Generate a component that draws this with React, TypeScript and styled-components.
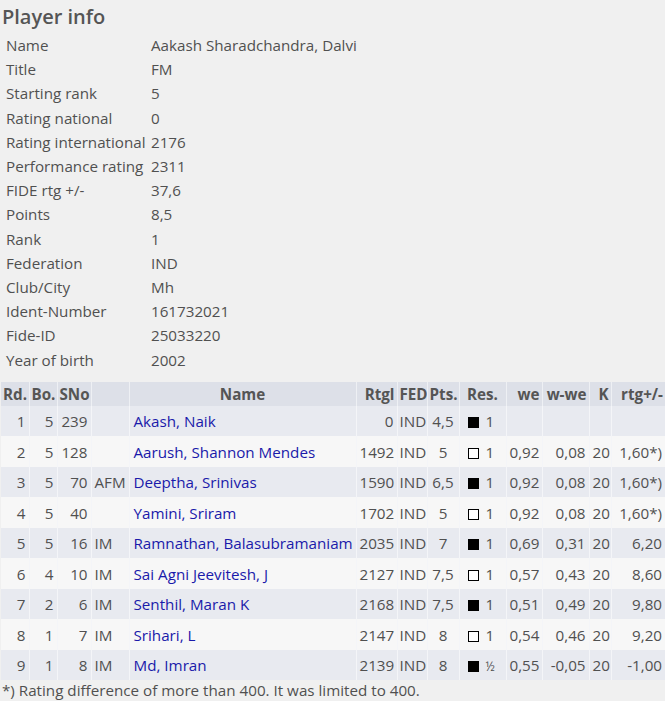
import React from "react";
import styled, { createGlobalStyle } from "styled-components";

const Global = createGlobalStyle`
  html, body { margin: 0; padding: 0; background: #f0f0f0; }
  body { font-family: "Open Sans", "Noto Sans", sans-serif; color: #505050; }
`;

const Page = styled.div`
  padding: 2px 0 0 1px;
  width: 664px;
`;

const Title = styled.h2`
  margin: 0 0 1px 1px;
  font-size: 20px;
  font-weight: 600;
  line-height: 30px;
  color: #555;
`;

const InfoTable = styled.div`
  display: grid;
  grid-template-columns: 145px auto;
  padding-left: 5px;
  font-size: 15.2px;
  margin-bottom: 10px;
`;

const InfoCell = styled.div`
  line-height: 24.2px;
  white-space: nowrap;
`;

const Table = styled.table`
  border-collapse: collapse;
  font-size: 15.2px;
  width: 664px;
  table-layout: fixed;
`;

const Th = styled.th<{ $align?: string }>`
  background: #dde0e8;
  font-weight: 700;
  color: #555;
  height: 24px;
  padding: 0 2px;
  text-align: ${(p) => p.$align || "right"};
  border-right: 1px solid #eef0f4;
  white-space: nowrap;
  overflow: hidden;
  &:last-child { border-right: none; }
`;

const Tr = styled.tr<{ $odd: boolean }>`
  background: ${(p) => (p.$odd ? "#e8eaf0" : "#f7f7f7")};
`;

const Td = styled.td<{ $align?: string; $pl?: number }>`
  height: 30.5px;
  padding: 0 3px 0 ${(p) => (p.$pl ?? 3)}px;
  text-align: ${(p) => p.$align || "right"};
  border-right: 1px solid #f4f5f8;
  white-space: nowrap;
  overflow: hidden;
  &:last-child { border-right: none; }
`;

const NameLink = styled.a`
  color: #1a1aaa;
  text-decoration: none;
`;

const Square = styled.span<{ $black: boolean }>`
  display: inline-block;
  width: 11px;
  height: 11px;
  box-sizing: border-box;
  background: ${(p) => (p.$black ? "#000" : "#fff")};
  border: 1px solid #000;
  vertical-align: -1px;
  margin-right: 7px;
`;

const Half = styled.span`
  font-size: 12px;
`;

const Footnote = styled.div`
  font-size: 15.2px;
  line-height: 21px;
  padding-left: 1px;
`;

const info: [string, string][] = [
  ["Name", "Aakash Sharadchandra, Dalvi"],
  ["Title", "FM"],
  ["Starting rank", "5"],
  ["Rating national", "0"],
  ["Rating international", "2176"],
  ["Performance rating", "2311"],
  ["FIDE rtg +/-", "37,6"],
  ["Points", "8,5"],
  ["Rank", "1"],
  ["Federation", "IND"],
  ["Club/City", "Mh"],
  ["Ident-Number", "161732021"],
  ["Fide-ID", "25033220"],
  ["Year of birth", "2002"],
];

type Row = {
  rd: number; bo: number; sno: number; title: string; name: string; rtg: number;
  pts: string; black: boolean; res: string; we: string; wwe: string; k: string; d: string;
};

const rows: Row[] = [
  { rd: 1, bo: 5, sno: 239, title: "", name: "Akash, Naik", rtg: 0, pts: "4,5", black: true, res: "1", we: "", wwe: "", k: "", d: "" },
  { rd: 2, bo: 5, sno: 128, title: "", name: "Aarush, Shannon Mendes", rtg: 1492, pts: "5", black: false, res: "1", we: "0,92", wwe: "0,08", k: "20", d: "1,60*)" },
  { rd: 3, bo: 5, sno: 70, title: "AFM", name: "Deeptha, Srinivas", rtg: 1590, pts: "6,5", black: true, res: "1", we: "0,92", wwe: "0,08", k: "20", d: "1,60*)" },
  { rd: 4, bo: 5, sno: 40, title: "", name: "Yamini, Sriram", rtg: 1702, pts: "5", black: false, res: "1", we: "0,92", wwe: "0,08", k: "20", d: "1,60*)" },
  { rd: 5, bo: 5, sno: 16, title: "IM", name: "Ramnathan, Balasubramaniam", rtg: 2035, pts: "7", black: true, res: "1", we: "0,69", wwe: "0,31", k: "20", d: "6,20" },
  { rd: 6, bo: 4, sno: 10, title: "IM", name: "Sai Agni Jeevitesh, J", rtg: 2127, pts: "7,5", black: false, res: "1", we: "0,57", wwe: "0,43", k: "20", d: "8,60" },
  { rd: 7, bo: 2, sno: 6, title: "IM", name: "Senthil, Maran K", rtg: 2168, pts: "7,5", black: true, res: "1", we: "0,51", wwe: "0,49", k: "20", d: "9,80" },
  { rd: 8, bo: 1, sno: 7, title: "IM", name: "Srihari, L", rtg: 2147, pts: "8", black: false, res: "1", we: "0,54", wwe: "0,46", k: "20", d: "9,20" },
  { rd: 9, bo: 1, sno: 8, title: "IM", name: "Md, Imran", rtg: 2139, pts: "8", black: true, res: "½", we: "0,55", wwe: "-0,05", k: "20", d: "-1,00" },
];

const widths = [28, 28, 34, 38, 227, 41, 30, 32, 47, 36, 47, 22, 54];

export default function App() {
  return (
    <Page>
      <Global />
      <Title>Player info</Title>
      <InfoTable>
        {info.map(([k, v]) => (
          <React.Fragment key={k}>
            <InfoCell>{k}</InfoCell>
            <InfoCell>{v}</InfoCell>
          </React.Fragment>
        ))}
      </InfoTable>
      <Table>
        <colgroup>
          {widths.map((w, i) => (
            <col key={i} style={{ width: w }} />
          ))}
        </colgroup>
        <thead>
          <tr>
            <Th>Rd.</Th>
            <Th>Bo.</Th>
            <Th>SNo</Th>
            <Th></Th>
            <Th $align="center">Name</Th>
            <Th>Rtgl</Th>
            <Th>FED</Th>
            <Th>Pts.</Th>
            <Th $align="center">Res.</Th>
            <Th>we</Th>
            <Th>w-we</Th>
            <Th>K</Th>
            <Th>rtg+/-</Th>
          </tr>
        </thead>
        <tbody>
          {rows.map((r, i) => (
            <Tr key={r.rd} $odd={i % 2 === 0}>
              <Td>{r.rd}</Td>
              <Td>{r.bo}</Td>
              <Td>{r.sno}</Td>
              <Td $align="left">{r.title}</Td>
              <Td $align="left" $pl={4}><NameLink>{r.name}</NameLink></Td>
              <Td>{r.rtg}</Td>
              <Td $align="left" $pl={2}>IND</Td>
              <Td $align="center">{r.pts}</Td>
              <Td $align="left" $pl={8}><Square $black={r.black} />{r.res === "½" ? <Half>½</Half> : r.res}</Td>
              <Td>{r.we}</Td>
              <Td>{r.wwe}</Td>
              <Td>{r.k}</Td>
              <Td>{r.d}</Td>
            </Tr>
          ))}
        </tbody>
      </Table>
      <Footnote>*) Rating difference of more than 400. It was limited to 400.</Footnote>
    </Page>
  );
}
